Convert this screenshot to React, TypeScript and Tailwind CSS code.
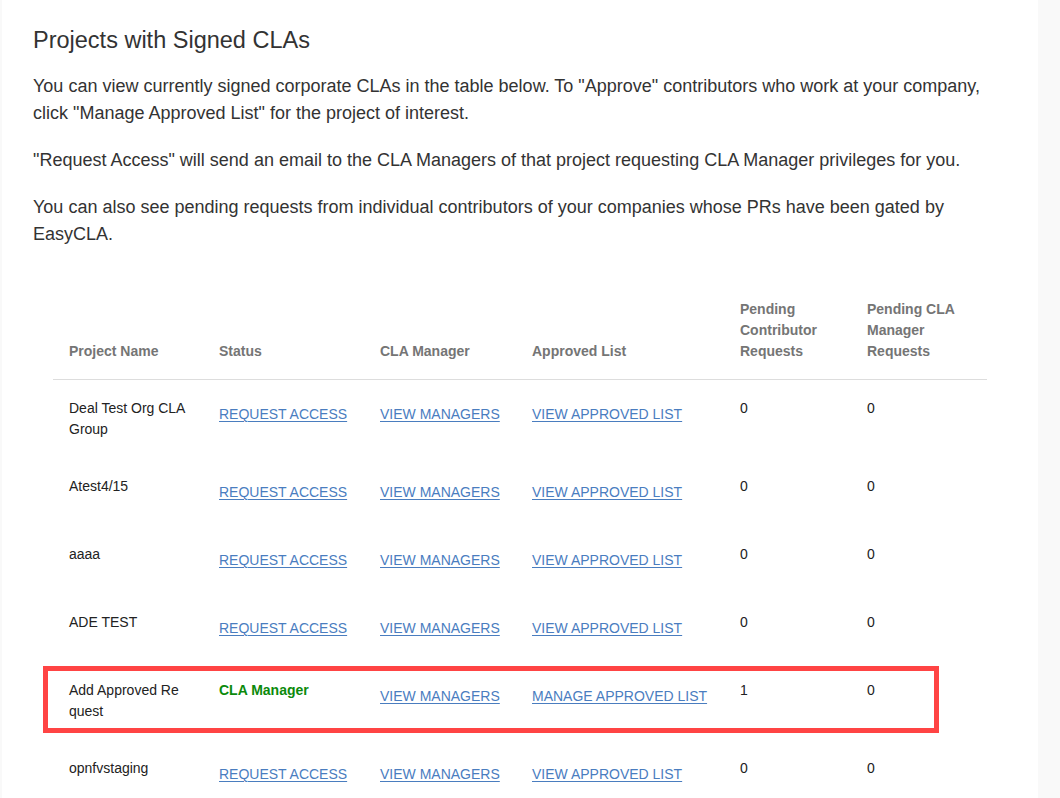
import React from "react";

type Row = {
  name: string;
  status: "request" | "manager";
  approved: "view" | "manage";
  contributor: number;
  managerReq: number;
  highlight?: boolean;
};

const rows: Row[] = [
  { name: "Deal Test Org CLA Group", status: "request", approved: "view", contributor: 0, managerReq: 0 },
  { name: "Atest4/15", status: "request", approved: "view", contributor: 0, managerReq: 0 },
  { name: "aaaa", status: "request", approved: "view", contributor: 0, managerReq: 0 },
  { name: "ADE TEST", status: "request", approved: "view", contributor: 0, managerReq: 0 },
  // zero-width space so the name wraps as "Add Approved Re / quest"
  { name: "Add Approved Re\u200Bquest", status: "manager", approved: "manage", contributor: 1, managerReq: 0, highlight: true },
  { name: "opnfvstaging", status: "request", approved: "view", contributor: 0, managerReq: 0 },
];

// links sit in a padded box so they hang a bit lower than plain cell text
const LinkCell = ({ label }: { label: string }) => (
  <a href="#" className="inline-block pt-[6px] pb-[5px] text-[#4a7dbf] underline underline-offset-[2px] decoration-[1px]">
    {label}
  </a>
);

const App = () => {
  return (
    <div className="min-h-screen bg-[#f9f9f9] flex" style={{ fontFamily: '"Liberation Sans", Arial, sans-serif' }}>
      <div className="ml-[2px] w-[1036px] bg-white pl-[31px] pt-[26px] pb-10">
        <h2 className="text-[23.5px] leading-[28px] text-[#333] mb-[19px]">Projects with Signed CLAs</h2>
        <div className="text-[18px] leading-[27px] text-[#333] pr-[40px] flex flex-col gap-[20px]">
          <p>
            You can view currently signed corporate CLAs in the table below. To "Approve" contributors who work at your
            company, click "Manage Approved List" for the project of interest.
          </p>
          <p>"Request Access" will send an email to the CLA Managers of that project requesting CLA Manager privileges for you.</p>
          <p>You can also see pending requests from individual contributors of your companies whose PRs have been gated by EasyCLA.</p>
        </div>

        <table className="mt-[35px] ml-[20px] w-[934px] table-fixed border-collapse text-[14px] leading-[21px]">
          <colgroup>
            <col className="w-[150px]" />
            <col className="w-[161px]" />
            <col className="w-[152px]" />
            <col className="w-[208px]" />
            <col className="w-[127px]" />
            <col className="w-[136px]" />
          </colgroup>
          <thead>
            <tr className="border-b border-[#dddddd] text-left align-bottom">
              <th className="px-4 pt-4 pb-[17px] font-bold text-[#757575]">Project Name</th>
              <th className="px-4 pt-4 pb-[17px] font-bold text-[#757575]">Status</th>
              <th className="px-4 pt-4 pb-[17px] font-bold text-[#757575]">CLA Manager</th>
              <th className="px-4 pt-4 pb-[17px] font-bold text-[#757575]">Approved List</th>
              <th className="px-4 pt-4 pb-[17px] font-bold text-[#757575]">Pending Contributor Requests</th>
              <th className="px-4 pt-4 pb-[17px] font-bold text-[#757575]">Pending CLA Manager Requests</th>
            </tr>
          </thead>
          <tbody>
            {rows.map((row, index) => (
              <tr key={index} className="align-top text-[#222]">
                <td className="relative px-4 py-[18px]">
                  {row.highlight && (
                    <div className="absolute left-[-10px] top-[4px] w-[896px] h-[67px] border-[5px] border-[#ff4444] pointer-events-none" />
                  )}
                  {row.name}
                </td>
                <td className="px-4 py-[18px]">
                  {row.status === "manager" ? (
                    <span className="font-bold text-[#0b8a0b]">CLA Manager</span>
                  ) : (
                    <LinkCell label="REQUEST ACCESS" />
                  )}
                </td>
                <td className="px-4 py-[18px]">
                  <LinkCell label="VIEW MANAGERS" />
                </td>
                <td className="px-4 py-[18px]">
                  <LinkCell label={row.approved === "manage" ? "MANAGE APPROVED LIST" : "VIEW APPROVED LIST"} />
                </td>
                <td className="px-4 py-[18px]">{row.contributor}</td>
                <td className="px-4 py-[18px]">{row.managerReq}</td>
              </tr>
            ))}
          </tbody>
        </table>
      </div>
    </div>
  );
};

export default App;
